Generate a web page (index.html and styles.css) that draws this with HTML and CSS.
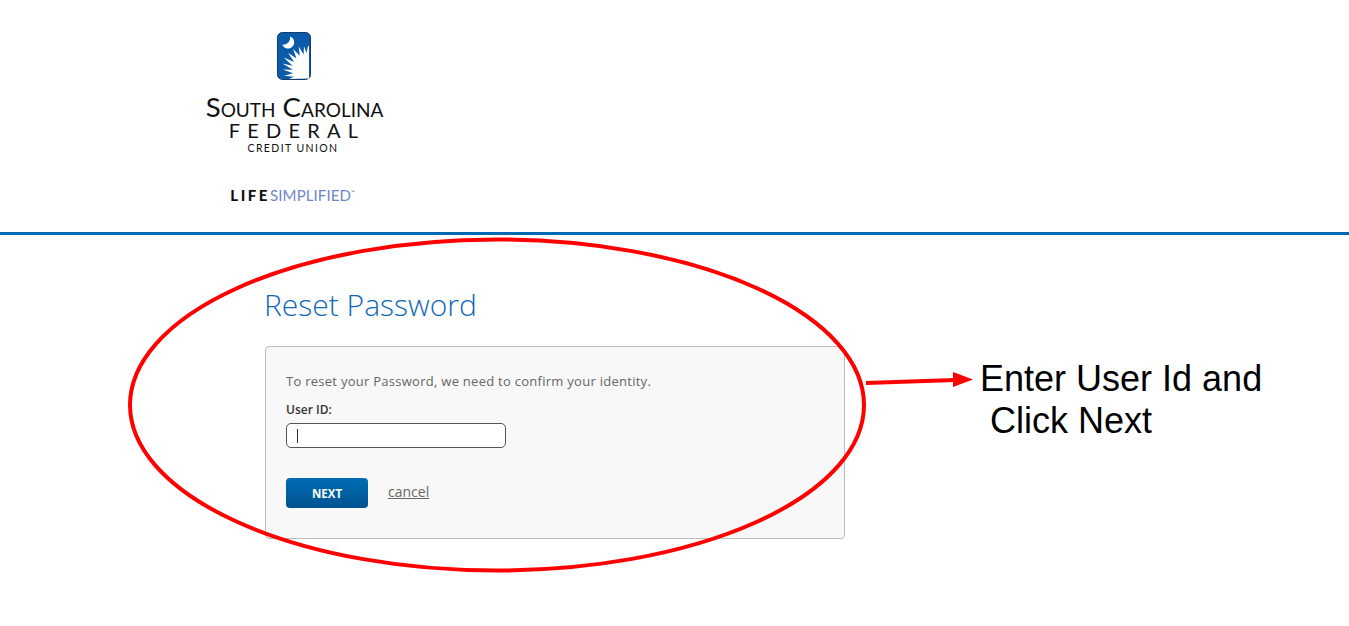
FILE: index.html
```html
<!DOCTYPE html>
<html lang="en">
<head>
    <meta charset="UTF-8">
    <meta name="viewport" content="width=device-width, initial-scale=1.0">
    <title>Reset Password</title>
    <link rel="stylesheet" href="styles.css">
</head>
<body>

    <header class="site-header">
        <div class="logo">
            <svg class="logo-mark" width="34" height="48" viewBox="0 0 34 48">
                <rect x="0.5" y="0.5" width="33" height="47" rx="5" fill="#0a5cab" stroke="#123a6b"/>
                <path d="M13 4.400A6.200 6.200 0 1 1 5.300 12.700A7 7 0 0 0 13 4.400z" fill="#fff"/>
                <path d="M32 14L31 14L29.500 21L27 14.300L26.600 22.500L21.700 14.500L22.800 23.700L16 17L19.500 26.600L11 20.700L17.100 30L6.700 25.400L15.600 33.700L5.400 31.600L15.900 37.800L5.600 37.600L16.100 41.200L7 43.800L17.100 44.700L12 47L32 46.500z" fill="#fff"/>
            </svg>
            <div class="logo-name">South Carolina</div>
            <div class="logo-federal">FEDERAL</div>
            <div class="logo-union">CREDIT UNION</div>
            <div class="logo-tag"><b>LIFE</b><span>SIMPLIFIED</span><sup>™</sup></div>
        </div>
    </header>

    <main class="content">
        <h1>Reset Password</h1>
        <div class="panel">
            <p class="intro">To reset your Password, we need to confirm your identity.</p>
            <label class="field-label" for="userId">User ID:</label>
            <div class="text-box" id="userId"><span class="caret"></span></div>
            <div class="actions">
                <button class="btn-next">NEXT</button>
                <a class="cancel" href="#">cancel</a>
            </div>
        </div>
    </main>

    <!-- annotation drawn on top of the screenshot -->
    <svg class="markup" width="1349" height="626" viewBox="0 0 1349 626">
        <ellipse cx="497" cy="405" rx="367" ry="165.500" fill="none" stroke="#f00" stroke-width="4"/>
        <path d="M866 383L955 380" stroke="#f00" stroke-width="4" fill="none"/>
        <path d="M953 372L973 379.500L953 387z" fill="#f00"/>
    </svg>
    <div class="note">Enter User Id and<br><span class="note-indent">Click Next</span></div>

</body>
</html>
```

FILE: styles.css
```css
body {
    margin: 0;
    height: 626px;
    overflow: hidden;
    background: #fff;
    font-family: 'Open Sans', sans-serif;
    color: #5f5f5f;
}

.site-header {
    height: 232px;
    border-bottom: 3px solid #0069b4;
    padding-left: 204px;
}

.logo {
    width: 181px;
    padding-top: 32px;
    display: flex;
    flex-direction: column;
    align-items: center;
    color: #111;
    font-family: 'Lato', sans-serif;
}

.logo-mark {
    display: block;
    margin: 0 2px 15px 0;
}

.logo-name {
    font-size: 27.600px;
    line-height: 24px;
    font-variant: small-caps;
    white-space: nowrap;
}

.logo-federal {
    margin: 1px -5px 0 0;
    font-size: 20px;
    line-height: 20px;
    letter-spacing: 7.200px;
}

.logo-union {
    margin: 1px 3px 0 0;
    font-size: 10.500px;
    line-height: 14px;
    letter-spacing: 1.400px;
}

.logo-tag {
    margin: 32px 4px 0 0;
    font-size: 15px;
    line-height: 16px;
    white-space: nowrap;
}

.logo-tag b {
    font-weight: 900;
    letter-spacing: 2.600px;
    color: #111;
}

.logo-tag span {
    color: #6f86c8;
    font-size: 15px;
    letter-spacing: 0.100px;
}

.logo-tag sup {
    font-size: 5px;
    color: #666;
    vertical-align: 7px;
    line-height: 0;
}

.content {
    width: 580px;
    margin-left: 265px;
}

h1 {
    margin: 50px 0 22px -1px;
    font-size: 30px;
    line-height: 39px;
    font-weight: 300;
    color: #0f69b4;
}

.panel {
    height: 191px;
    border: 1px solid #bdbdbd;
    border-radius: 4px;
    background: #f8f8f8;
    padding-left: 20px;
}

.intro {
    margin: 25px 0 0;
    font-size: 13px;
    line-height: 18px;
    letter-spacing: 0.270px;
    color: #666;
}

.field-label {
    display: block;
    margin-top: 12px;
    font-size: 12px;
    line-height: 16px;
    font-weight: 600;
    color: #333;
}

.text-box {
    width: 208px;
    height: 23px;
    margin-top: 5px;
    border: 1px solid #555;
    border-radius: 5px;
    background: #fff;
    display: flex;
    align-items: center;
    padding-left: 10px;
}

.caret {
    width: 1px;
    height: 14px;
    background: #333;
}

.actions {
    display: flex;
    align-items: center;
    gap: 20px;
    margin-top: 30px;
}

.btn-next {
    width: 82px;
    height: 30px;
    border: none;
    border-radius: 4px;
    background: linear-gradient(#006db6, #00528f);
    color: #fff;
    font-family: 'Open Sans', sans-serif;
    font-size: 11.500px;
    font-weight: 700;
    padding: 0;
}

.cancel {
    font-size: 14px;
    color: #666;
    margin-top: -3px;
}

.markup {
    position: absolute;
    left: 0;
    top: 0;
}

.note {
    position: absolute;
    left: 980px;
    top: 358px;
    font-family: 'Liberation Sans', Arial, sans-serif;
    font-size: 36px;
    line-height: 42px;
    color: #000;
    white-space: nowrap;
}

.note-indent {
    margin-left: 10px;
}
```
